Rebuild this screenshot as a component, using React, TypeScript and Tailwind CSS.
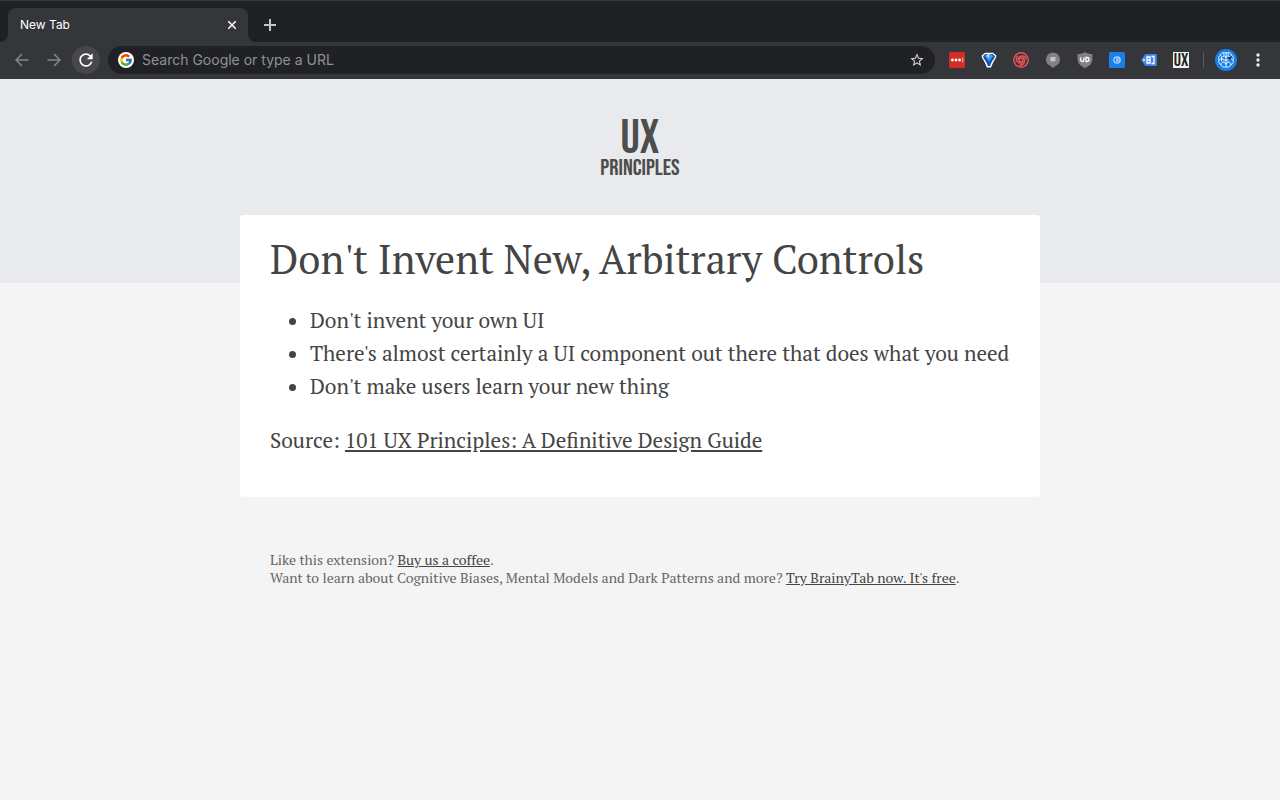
import React from "react";
import { FcGoogle } from "react-icons/fc";
import { MdRefresh, MdStarBorder } from "react-icons/md";

const tips = [
  "Don't invent your own UI",
  "There's almost certainly a UI component out there that does what you need",
  "Don't make users learn your new thing",
];

// extension icons, all on a 16px grid
const extensions = [
  {
    name: "LastPass",
    icon: (
      <>
        <rect width="16" height="16" rx="1.5" fill="#d32d27" />
        <circle cx="3.4" cy="8" r="1.4" fill="#fff" />
        <circle cx="7" cy="8" r="1.4" fill="#fff" />
        <circle cx="10.6" cy="8" r="1.4" fill="#fff" />
        <rect x="13.2" y="5.5" width="1" height="5" fill="#f3b3b0" />
      </>
    ),
  },
  {
    name: "Vimium",
    icon: (
      <>
        <path d="M4 .8h8L15.4 3.5c0 3-3.4 6-5.2 11.9H5.8C4 9.5.6 6.5.6 3.5z" fill="#fff" />
        <path d="M4.4 2h7.2l2.4 2c-.4 3-3.6 5-4.800 10H6.800C5.600 9 2.400 7 2 4z" fill="#0f55ad" />
        <path d="M5.600 2.300h4.800l1.600 2L8 9.500 4 4.300z" fill="#3f9df0" />
        <path d="M6.200 2.300h2.400L7.800 6 5.600 4z" fill="#b4e0ff" />
      </>
    ),
  },
  {
    name: "Spiral",
    icon: (
      <g fill="none" stroke="#ef5358" strokeWidth="1.4" strokeLinecap="round">
        <circle cx="8" cy="8" r="7.2" />
        {[0, 120, 240].map((deg) => (
          <path key={deg} d="M5.200 7.600C5.600 3.200 11.500 2.600 13.200 6.800" transform={`rotate(${deg} 8 8)`} />
        ))}
        <circle cx="8" cy="8" r="2" />
      </g>
    ),
  },
  {
    name: "Page notes",
    icon: (
      <>
        <path d="M8 .4a7 7 0 0 0-2.700 13.400L8 16l2.700-2.200A7 7 0 0 0 8 .4z" fill="#828282" />
        <path d="M5.500 5h5v4.200h-2L7.300 10.500V9.200H5.500z" fill="#c4c4c4" />
      </>
    ),
  },
  {
    name: "uBlock Origin",
    icon: (
      <>
        <path d="M8 0c2 1.4 4.400 2 7.400 2v5c0 4.400-3 7-7.400 9C3.600 14 .6 11.400.6 7V2C3.600 2 6 1.400 8 0z" fill="#828282" />
        <path d="M3.600 5.500v2.300a1.700 1.700 0 0 0 3.400 0V5.500M9 5.500v4h1a2 2 0 0 0 0-4z" fill="none" stroke="#fff" strokeWidth="1.300" />
      </>
    ),
  },
  {
    name: "Clipper",
    icon: (
      <>
        <rect width="16" height="16" rx="1.500" fill="#1a80e8" />
        <circle cx="8" cy="8" r="3.200" fill="none" stroke="#b8dcff" strokeWidth="1.200" />
        <path d="M11 6.800H7.500M7 8.800h4M8 6v4" stroke="#b8dcff" strokeWidth="1" />
      </>
    ),
  },
  {
    name: "Tag Assistant",
    icon: (
      <>
        <path d="M4.500 2H15a.8.8 0 0 1 .8.8v10.400a.8.8 0 0 1-.8.8H4.500L0 8z" fill="#4285f4" />
        <circle cx="3" cy="8" r="1" fill="#fff" />
        <path d="M6 5h3v6H6zM6 8h3M10.500 4.500H13v7h-2.500" fill="none" stroke="#fff" strokeWidth="1.300" />
      </>
    ),
  },
];

function BrainIcon() {
  return (
    <svg viewBox="0 0 22 22" className="h-[22px] w-[22px]" aria-hidden="true">
      <circle cx="11" cy="11" r="11" fill="#1a80e8" />
      <g fill="none" stroke="#e4f2ff" strokeLinecap="round" strokeLinejoin="round">
        <path d="M11 4.200C8.500 2.600 6 3.800 5.600 6 3.600 7 3.200 9.200 4 10.800c-.8 2 .2 4 2 4.800.6 2 2.800 3.200 5 2.200 2.200 1 4.400-.2 5-2.200 1.800-.8 2.800-2.800 2-4.800.8-1.600.4-3.800-1.600-4.800C16 3.800 13.500 2.600 11 4.200z" />
        <path d="M11 4.200v13.600M5.600 6c.4 1.400 1.400 2 2.900 1.800M4 10.800c1.200-1.200 2.600-1.300 4-.4M6 15.600c.2-1.700 1.200-2.600 2.800-2.600M8.800 4v2.500L11 8M8 10.400 11 11.500M8.800 13l2.200 2M6.500 8.500v3.300" />
        <path d="M16.400 6c-.4 1.400-1.400 2-2.900 1.800M18 10.800c-1.200-1.200-2.600-1.300-4-.4M16 15.600c-.2-1.700-1.200-2.600-2.800-2.600M13.200 4v2.500L11 8M14 10.400l-3 1.100M13.200 13 11 15" />
      </g>
      <path d="M13 8.500 17 7l-1.500 3.500-2 .5z" fill="#12305c" />
    </svg>
  );
}

function BrowserBar() {
  return (
    <header className="bg-[#202124] font-['Inter',sans-serif]">
      <div className="flex items-end border-t border-[#37383b] pt-[7px]">
        <svg viewBox="0 0 8 8" className="h-2 w-2" aria-hidden="true">
          <path d="M8 0v8H0a8 8 0 0 0 8-8z" fill="#35363a" />
        </svg>
        <div className="flex h-[34px] w-60 items-center justify-between rounded-t-lg bg-[#35363a] px-3 text-white">
          <span className="text-xs">New Tab</span>
          <button type="button" aria-label="Close tab" className="flex h-4 w-2 items-center justify-center">
            <svg viewBox="0 0 8 8" className="h-2 w-2" stroke="#fff" strokeWidth="1.500" aria-hidden="true">
              <path d="M0 0l8 8M8 0L0 8" />
            </svg>
          </button>
        </div>
        <svg viewBox="0 0 8 8" className="h-2 w-2" aria-hidden="true">
          <path d="M0 0v8h8a8 8 0 0 1-8-8z" fill="#35363a" />
        </svg>
        <button type="button" aria-label="New tab" className="flex h-[34px] w-7 items-center justify-center">
          <svg viewBox="0 0 12 12" className="h-3 w-3" stroke="#c4c7ca" strokeWidth="2" aria-hidden="true">
            <path d="M6 0v12M0 6h12" />
          </svg>
        </button>
      </div>

      <div className="flex h-[37px] items-center bg-[#35363a] pr-3 pb-0.5 pl-2">
        <nav aria-label="History" className="flex items-center gap-1">
          <button type="button" aria-label="Back" className="flex h-7 w-7 items-center justify-center">
            <svg viewBox="0 0 14 14" className="h-3.5 w-3.5" fill="none" stroke="#85878a" strokeWidth="1.500" aria-hidden="true">
              <path d="M13.500 7H1M7 1L1 7l6 6" />
            </svg>
          </button>
          <button type="button" aria-label="Forward" className="flex h-7 w-7 items-center justify-center">
            <svg viewBox="0 0 14 14" className="h-3.5 w-3.5" fill="none" stroke="#85878a" strokeWidth="1.500" aria-hidden="true">
              <path d="M.5 7H13M7 1l6 6-6 6" />
            </svg>
          </button>
          <button type="button" aria-label="Reload" className="flex h-7 w-7 items-center justify-center rounded-full bg-[#47484c]">
            <MdRefresh className="h-5 w-5 text-white" />
          </button>
        </nav>
        <div className="ml-2 flex h-7 flex-1 items-center rounded-full bg-[#202124] px-2.5">
          <span className="flex h-4 w-4 items-center justify-center rounded-full bg-white">
            <FcGoogle className="h-3.5 w-3.5" />
          </span>
          <input
            type="text"
            aria-label="Address bar"
            placeholder="Search Google or type a URL"
            className="ml-2 flex-1 bg-transparent text-sm text-white outline-none placeholder:text-[#8f9194]"
          />
          <button type="button" aria-label="Bookmark this tab">
            <MdStarBorder className="h-4 w-4 text-[#d5d6d8]" />
          </button>
        </div>
        <div className="ml-3.5 flex items-center gap-4">
          {extensions.map((ext) => (
            <button key={ext.name} type="button" aria-label={ext.name}>
              <svg viewBox="0 0 16 16" className="h-4 w-4" aria-hidden="true">
                {ext.icon}
              </svg>
            </button>
          ))}
          <button
            type="button"
            className="flex h-4 w-4 items-center justify-center bg-[#f3f3ee] pt-0.5 font-['Bebas_Neue','Oswald','Roboto_Condensed','Liberation_Sans',sans-serif] text-lg leading-4 text-[#222]"
          >
            UX
          </button>
        </div>
        <span className="ml-3.5 h-4 w-px bg-[#5b5c60]" />
        <button type="button" aria-label="BrainyTab" className="ml-[11px]">
          <BrainIcon />
        </button>
        <button type="button" aria-label="Menu" className="ml-[11px] flex w-5 justify-center">
          <svg viewBox="0 0 4 14" className="h-3.5 w-1" fill="#e8eaed" aria-hidden="true">
            <circle cx="2" cy="2" r="1.700" />
            <circle cx="2" cy="7" r="1.700" />
            <circle cx="2" cy="12" r="1.700" />
          </svg>
        </button>
      </div>
    </header>
  );
}

export default function App() {
  return (
    <div className="min-h-screen bg-[#f4f4f4] font-['PT_Serif','Liberation_Serif',serif] text-[#444]">
      <BrowserBar />

      <div className="flex h-[204px] justify-center bg-[#e8eaed] pt-10 text-center font-['Bebas_Neue','Oswald','Roboto_Condensed','Liberation_Sans',sans-serif] text-[#4c4d4c]">
        <div>
          <div className="text-5xl leading-10">UX</div>
          <div className="text-[23px] leading-[18px]">PRINCIPLES</div>
        </div>
      </div>

      <main className="mx-auto -mt-[68px] max-w-[800px]">
        <article className="rounded bg-white px-[30px] pt-[15px] pb-10">
          <h1 className="text-[40px] leading-[58px]">Don't Invent New, Arbitrary Controls</h1>
          <ul className="mt-4 list-disc pl-10 text-[21px] leading-[33px]">
            {tips.map((tip) => (
              <li key={tip}>{tip}</li>
            ))}
          </ul>
          <p className="mt-[21px] text-[21px] leading-[33px]">
            Source:{" "}
            <a href="#book" className="underline">
              101 UX Principles: A Definitive Design Guide
            </a>
          </p>
        </article>

        <footer className="mt-[54px] px-[30px] text-sm leading-[18px] text-[#666]">
          <p>
            Like this extension?{" "}
            <a href="#coffee" className="text-[#444] underline">
              Buy us a coffee
            </a>
            .
          </p>
          <p>
            Want to learn about Cognitive Biases, Mental Models and Dark Patterns and more?{" "}
            <a href="#brainytab" className="text-[#444] underline">
              Try BrainyTab now. It's free
            </a>
            .
          </p>
        </footer>
      </main>
    </div>
  );
}
